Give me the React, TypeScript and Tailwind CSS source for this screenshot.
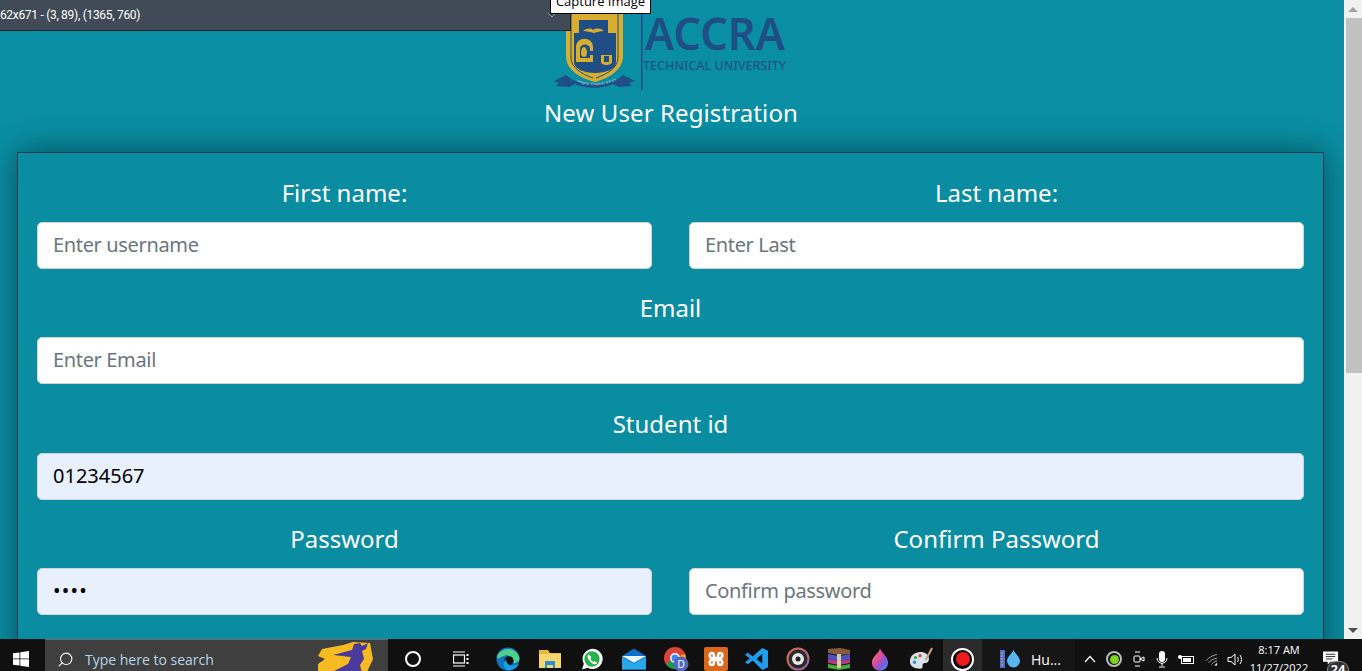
import { Search } from "lucide-react";

const font = "font-['Noto_Sans',sans-serif]";

function Field({ label, placeholder, value, type = "text" }: { label: string; placeholder: string; value?: string; type?: string }) {
  return (
    <div className="flex min-w-0 flex-col">
      <label className="h-[52px] pt-[8px] text-center text-[24px] leading-[30px] text-white">{label}</label>
      <input
        readOnly
        type={type}
        placeholder={placeholder}
        value={value ?? ""}
        className={`h-[47px] w-full rounded-[5px] border border-[#ced4da] px-[15px] pb-[2px] text-[20px] text-black placeholder:tracking-[-0.35px] placeholder:text-[#6c757d] ${value ? "bg-[#e8f0fe]" : "bg-white"} ${type === "password" ? "tracking-[1.2px]" : ""}`}
      />
    </div>
  );
}

function Logo() {
  return (
    <svg width="240" height="92" viewBox="0 0 240 92" className="block">
      <path d="M13 8h57v48c0 14-14 22-28 26C27 78 13 70 13 56z" fill="#d9ae2e" />
      <path d="M18 8v50c0 9 10 16 22 20M65 8v50c0 9-10 16-22 20" fill="none" stroke="#1f4d86" strokeWidth="1" />
      <path d="M26 20h29v13H26z" fill="#1f4d86" />
      <path d="M21 33h42v29c0 7-10 11-21 11s-21-4-21-11z" fill="#1f4d86" />
      <path d="M30 31c4-3 8-3 10-1 3-2 7-2 11 1-4 0-7 1-10 2-4-1-7-2-11-2z" fill="#d9ae2e" />
      <path d="M23 62V47c0-11 17-11 17 0v4h-3v-2c0-6-10-6-10 0v9h10v-3h3v7z" fill="#d9ae2e" />
      <path d="M31 47c2 0 3 3 3 6s-2 4-3 4-3-1-3-4 1-6 3-6z" fill="#d9ae2e" />
      <path d="M48 55h11v7c0 2-3 3-5.500 3S48 64 48 62z" fill="#d9ae2e" />
      <path d="M51 56h5v6h-5z" fill="#1f4d86" />
      <path d="M1 81l12-6 5 4c14 7 33 7 47 0l5-4 12 6-6 2 3 3-13 1-6-3c-12 5-26 5-38 0l-6 3-13-1 3-3z" fill="#1f4d86" />
      <path id="motto" d="M20 80c14 7 29 7 43 0" fill="none" />
      <text fontSize="3.500" fill="#c9d6e2" fontFamily="Liberation Sans, sans-serif">
        <textPath href="#motto" startOffset="4">Integrity, Creativity &amp; Excellence</textPath>
      </text>
      <rect x="88" y="14" width="1.500" height="76" fill="#1f4d86" />
      <text x="92" y="50" fill="#1f4d86" fontSize="45" fontWeight="600" fontFamily="Noto Sans, sans-serif" textLength="140" lengthAdjust="spacingAndGlyphs">ACCRA</text>
      <text x="90" y="70" fill="#1d5585" fontSize="12.500" fontWeight="500" fontFamily="Noto Sans, sans-serif" textLength="143" lengthAdjust="spacingAndGlyphs">TECHNICAL UNIVERSITY</text>
    </svg>
  );
}

function TaskIcons() {
  return (
    <div className="flex h-full items-center">
      {/* circle */}
      <span className="ml-[17px] h-[16px] w-[16px] rounded-full border-[2.5px] border-white" />
      {/* task view */}
      <svg width="16" height="16" viewBox="0 0 16 16" className="ml-[32px]" fill="none" stroke="#fff" strokeWidth="1.200">
        <path d="M0 1h12M0 15h12" />
        <rect x="0.500" y="4" width="11" height="8" />
        <path d="M14.500 3v2M14.500 7v2M14.500 11v2" strokeWidth="2" />
      </svg>
      {/* edge */}
      <svg width="24" height="24" viewBox="0 0 26 26" className="ml-[27px]">
        <circle cx="13" cy="13" r="12.500" fill="#0f75bc" />
        <path d="M1 11C4 0 22-2 25.500 12c0 4-3 6-7 5 2-6-6-10-11-7-3 1-5 4-6.500 1z" fill="#4cd08a" />
        <circle cx="14" cy="15" r="5" fill="#101010" />
        <path d="M13 25.500c-6-3-6-9-2-12 0 6 7 9 14 5-2 4-7 7-12 7z" fill="#1b9de2" />
      </svg>
      {/* explorer */}
      <svg width="22" height="20" viewBox="0 0 22 20" className="ml-[19px]">
        <path d="M0 1h9l2 3h11v15H0z" fill="#e9b93c" />
        <path d="M0 5h22v14H0z" fill="#f5d76e" />
        <path d="M6 12h10v7h-2v-3H8v3H6z" fill="#2a8fd6" />
      </svg>
      {/* whatsapp */}
      <svg width="22" height="23" viewBox="0 0 23 23" className="ml-[20px]">
        <path d="M1 22l2-6a10.500 10.500 0 1 1 4 4z" fill="#fff" />
        <circle cx="11.500" cy="11" r="8" fill="#25b24a" />
        <path d="M8 6c-2 2-1 5 2 8s6 3 7 1l-3-2-1 1c-2-1-3-2-3-4l1-1z" fill="#fff" />
      </svg>
      {/* mail */}
      <svg width="24" height="22" viewBox="0 0 25 22" className="ml-[19px]">
        <path d="M0 8L12.500 0 25 8v14H0z" fill="#0f6fc6" />
        <path d="M0 8h25L12.500 15z" fill="#e8f6ff" />
        <path d="M0 9l12.500 7L25 9v13H0z" fill="#28a8ea" />
      </svg>
      {/* chrome */}
      <svg width="26" height="26" viewBox="0 0 26 26" className="ml-[17px]">
        <circle cx="12" cy="12" r="11" fill="#db4437" />
        <path d="M3 18L12 12l9 6a11 11 0 0 1-18 0z" fill="#0f9d58" />
        <path d="M12 12l10-4a11 11 0 0 1-3 12l-7-8z" fill="#f4b400" />
        <circle cx="12" cy="12" r="5" fill="#fff" />
        <circle cx="12" cy="12" r="3.500" fill="#4285f4" />
        <circle cx="18" cy="18" r="7.500" fill="#5367bd" />
        <text x="18" y="21.500" textAnchor="middle" fontSize="10" fill="#fff" fontFamily="Liberation Sans, sans-serif">D</text>
      </svg>
      {/* xampp */}
      <div className="ml-[15px] flex h-[24px] w-[24px] items-center justify-center rounded-[2px] bg-[#d9681d]">
        <svg width="18" height="18" viewBox="0 0 18 18" fill="none" stroke="#fff" strokeWidth="2.500">
          <path d="M5 3c-3 0-3 5 0 5h8c3 0 3-5 0-5-2 0-2 3-2 3v6s0 3 2 3c3 0 3-5 0-5H5c-3 0-3 5 0 5 2 0 2-3 2-3V6S7 3 5 3z" />
        </svg>
      </div>
      {/* vscode */}
      <svg width="24" height="24" viewBox="0 0 25 25" className="ml-[17px]">
        <path d="M18 1l6 3v17l-6 3-10-10-5 4-3-2 5-4-5-4 3-2 5 4z" fill="#1f9cf0" />
        <path d="M18 7l-6 5.500 6 5z" fill="#101010" />
      </svg>
      {/* groove */}
      <svg width="24" height="24" viewBox="0 0 24 24" className="ml-[17px]">
        <defs>
          <linearGradient id="groove" x1="0" y1="0" x2="1" y2="1">
            <stop offset="0" stopColor="#d9713c" />
            <stop offset="1" stopColor="#9a5fb4" />
          </linearGradient>
        </defs>
        <circle cx="12" cy="12" r="10.500" fill="#2a2a2a" stroke="url(#groove)" strokeWidth="2" />
        <circle cx="12" cy="12" r="6" fill="#e6e6e6" />
        <circle cx="12" cy="12" r="2.500" fill="#222" />
      </svg>
      {/* winrar */}
      <svg width="24" height="22" viewBox="0 0 24 22" className="ml-[17px]">
        <path d="M1 1l12-1 10 2v4L12 7 1 5z" fill="#8a5a3c" />
        <path d="M1 6l11 2 11-2v5l-11 2-11-2z" fill="#4a52c4" />
        <path d="M1 11l11 2 11-2v4l-11 2-11-2z" fill="#b03a8c" />
        <path d="M1 16l11 2 11-2v4l-11 2-11-2z" fill="#3fae3a" />
        <rect x="10" y="6" width="4" height="14" fill="#d8c9a0" />
      </svg>
      {/* drop */}
      <svg width="18" height="25" viewBox="0 0 20 25" className="ml-[20px]">
        <defs>
          <linearGradient id="drop" x1="0" y1="0" x2="1" y2="1">
            <stop offset="0" stopColor="#f5a623" />
            <stop offset="0.4" stopColor="#e14a9b" />
            <stop offset="0.7" stopColor="#7a5ae0" />
            <stop offset="1" stopColor="#2aa4f0" />
          </linearGradient>
        </defs>
        <path d="M10 0c1 5 9 9 9 16a9 9 0 0 1-18 0C1 9 9 6 10 0z" fill="url(#drop)" />
      </svg>
      {/* palette */}
      <svg width="24" height="24" viewBox="0 0 26 25" className="ml-[20px]">
        <path d="M1 15C1 8 8 4 14 5c6 1 9 6 7 10-1 3-5 1-6 3s1 5-3 5C6 23 1 21 1 15z" fill="#d9e2ea" />
        <circle cx="7" cy="11" r="1.800" fill="#3fae3a" />
        <circle cx="12" cy="9" r="1.800" fill="#e14a4a" />
        <circle cx="6" cy="16" r="1.800" fill="#2a8fd6" />
        <path d="M24 0l2 1-7 13-2-1z" fill="#c9a070" />
      </svg>
      {/* record */}
      <div className="ml-[10px] flex h-full w-[39px] items-center justify-center bg-[#2b2b2b]">
        <span className="flex h-[23px] w-[23px] items-center justify-center rounded-full border-2 border-white bg-black">
          <span className="h-[14px] w-[14px] rounded-full bg-[#ee1c1c]" />
        </span>
      </div>
      {/* Hu... */}
      <div className="flex h-full w-[93px] items-center bg-[#161616] pl-[18px]">
        <svg width="20" height="18" viewBox="0 0 20 18">
          <rect x="0" y="0" width="5" height="18" fill="#4d6fd0" />
          <path d="M1 3h2M1 6h2M1 9h2M1 12h2M1 15h2" stroke="#d6c04a" />
          <path d="M13.500 0c2 4 6.500 7 6.500 11a6.500 6.500 0 0 1-13 0c0-4 4.500-7 6.500-11z" fill="#58b4f0" />
        </svg>
        <span className="ml-[11px] text-[14px] text-white">Hu...</span>
      </div>
    </div>
  );
}

function Tray() {
  return (
    <div className="ml-[9px] flex h-full items-center text-white">
      <svg width="12" height="8" viewBox="0 0 12 8" fill="none" stroke="#fff" strokeWidth="1.200"><path d="M1 7l5-5.500L11 7" /></svg>
      <span className="ml-[10px] flex h-[16px] w-[16px] items-center justify-center rounded-full border-2 border-[#bbb]">
        <span className="h-[9px] w-[9px] rounded-full bg-[#7ed321]" />
      </span>
      <svg width="12" height="16" viewBox="0 0 12 16" fill="none" stroke="#fff" className="ml-[11px]">
        <path d="M2 1h5M2 15h5" /><rect x="1" y="5" width="6" height="6" rx="1" /><path d="M7 8l4-2v4z" />
      </svg>
      <svg width="12" height="17" viewBox="0 0 12 17" className="ml-[11px]">
        <rect x="3" y="0" width="6" height="11" rx="3" fill="#fff" />
        <path d="M1 7c0 7 10 7 10 0M6 12v3M3 16h6" fill="none" stroke="#fff" />
      </svg>
      <svg width="16" height="11" viewBox="0 0 16 11" className="ml-[10px]">
        <rect x="3.500" y="2.500" width="12" height="7" fill="none" stroke="#fff" />
        <rect x="5" y="4" width="8" height="4" fill="#fff" />
        <circle cx="2" cy="3" r="2" fill="#fff" />
      </svg>
      <svg width="13" height="13" viewBox="0 0 14 13" fill="none" stroke="#aaa" className="ml-[11px]">
        <path d="M1 8c3-4 8-6 12-7M4 10c2-3 5-4 9-5M7 12c1-2 3-3 6-4" />
        <path d="M13 10v3h-3z" fill="#fff" stroke="none" />
      </svg>
      <svg width="16" height="13" viewBox="0 0 16 13" fill="none" stroke="#fff" className="ml-[9px]">
        <path d="M1 4.500h3L8 1v11L4 8.500H1z" /><path d="M10.500 4c1 1.500 1 3.500 0 5M13 2c2 3 2 6 0 9" />
      </svg>
      <div className="ml-[3px] w-[66px] text-center text-[11px] leading-[18px] text-white">
        <div>8:17 AM</div>
        <div>11/27/2022</div>
      </div>
      <div className="relative ml-[11px] h-full w-[25px]">
        <svg width="16" height="14" viewBox="0 0 17 14" className="absolute left-0 top-[12px]">
          <path d="M0 0h16v11H8l-3 3v-3H0z" fill="#fff" />
          <path d="M3 3h10M3 5.500h10M3 8h7" stroke="#222" />
        </svg>
        <span className="absolute left-[5px] top-[23px] flex h-[16px] w-[20px] items-center justify-center rounded-full bg-[#333] text-[13px] font-bold text-white ring-1 ring-[#888]">24</span>
      </div>
    </div>
  );
}

export default function App() {
  return (
    <div className={`relative flex h-screen w-full flex-col overflow-hidden ${font}`}>
      <div className="flex min-h-0 flex-1">
        <main className="min-w-0 flex-1 overflow-hidden bg-[#0a8ea3]">
          <div className="flex h-[92px] justify-center pl-[2px]">
            <Logo />
          </div>
          <h1 className="h-[60px] pr-[2px] pt-[6px] text-center text-[24px] font-normal leading-[30px] tracking-[0.1px] text-white">New User Registration</h1>
          <form className="ml-[17px] mr-[20px] h-[520px] border border-[#2f3d4c] bg-[#0a8da1] px-[19px] pt-[17px] shadow-[0_0_30px_rgba(0,0,0,0.45)]">
            <div className="grid grid-cols-2 gap-x-[37px] gap-y-[16.33px]">
              <Field label="First name:" placeholder="Enter username" />
              <Field label="Last name:" placeholder="Enter Last" />
              <div className="col-span-2"><Field label="Email" placeholder="Enter Email" /></div>
              <div className="col-span-2"><Field label="Student id" placeholder="" value="01234567" /></div>
              <Field label="Password" placeholder="" value="1234" type="password" />
              <Field label="Confirm Password" placeholder="Confirm password" />
            </div>
          </form>
        </main>
        <div className="flex w-[18px] flex-col justify-between bg-[#f1f1f1]">
          <div className="flex h-[18px] items-center justify-center">
            <span className="border-x-[5px] border-b-[5px] border-x-transparent border-b-[#a3a3a3]" />
          </div>
          <div className="mb-auto ml-[2px] h-[355px] bg-[#c1c1c1]" />
          <div className="flex h-[18px] items-center justify-center">
            <span className="border-x-[5px] border-t-[5px] border-x-transparent border-t-[#505050]" />
          </div>
        </div>
      </div>

      <footer className="h-[32px] shrink-0 overflow-hidden bg-[#101010] font-['Open_Sans','Noto_Sans',sans-serif]">
        <div className="flex h-[40px] items-center">
          <div className="flex w-[45px] pl-[13px]">
            <svg width="16" height="16" viewBox="0 0 16 16" fill="#fff">
              <path d="M0 2.300L6.500 1.400V7.500H0zM7.300 1.300L16 0V7.500H7.300zM0 8.300H6.500V14.600L0 13.700zM7.300 8.300H16V16L7.300 14.700z" />
            </svg>
          </div>
          <div className="relative flex h-full w-[343px] items-center border-t border-[#6a6a6a] bg-[#3f3f3f] pl-[12px]">
            <Search size={17} strokeWidth={1.500} className="-scale-x-100 text-white" />
            <span className="ml-[11px] text-[14px] text-[#b9d4ea]">Type here to search</span>
            <svg width="56" height="31" viewBox="0 0 56 31" className="absolute left-[273px] top-[1px]">
              <path d="M4 8L25 4l10-3 17 1 3 16-6 13H0v-8l7-5-7-3z" fill="#f7bb22" />
              <path d="M15 14l19-5 2-6 6-1 2 3 6-3-2 6-4 2 2 8-4 6 2 8H12l18-9 3-7z" fill="#4b3a9c" />
            </svg>
          </div>
          <TaskIcons />
          <Tray />
        </div>
      </footer>

      {/* capture tool overlay */}
      <div className="absolute left-0 top-0 flex h-[31px] w-[571px] items-center overflow-hidden border-b border-r border-[#1d232b] bg-[#414b57] font-['Roboto',sans-serif]">
        <span className="-ml-[13px] shrink-0 whitespace-nowrap text-[12px] tracking-[-0.3px] text-white">1362x671 - (3, 89), (1365, 760)</span>
        <svg width="10" height="6" viewBox="0 0 10 6" fill="none" stroke="#9aa3ad" className="absolute left-[547px] top-[12px]">
          <path d="M1 1l4 4 4-4" />
        </svg>
      </div>
      <div className="absolute left-[550px] top-[-8px] flex h-[22px] w-[101px] items-center justify-center border border-black bg-white pb-[2px] font-['Open_Sans',sans-serif] text-[13px] text-black">
        Capture Image
      </div>
    </div>
  );
}
